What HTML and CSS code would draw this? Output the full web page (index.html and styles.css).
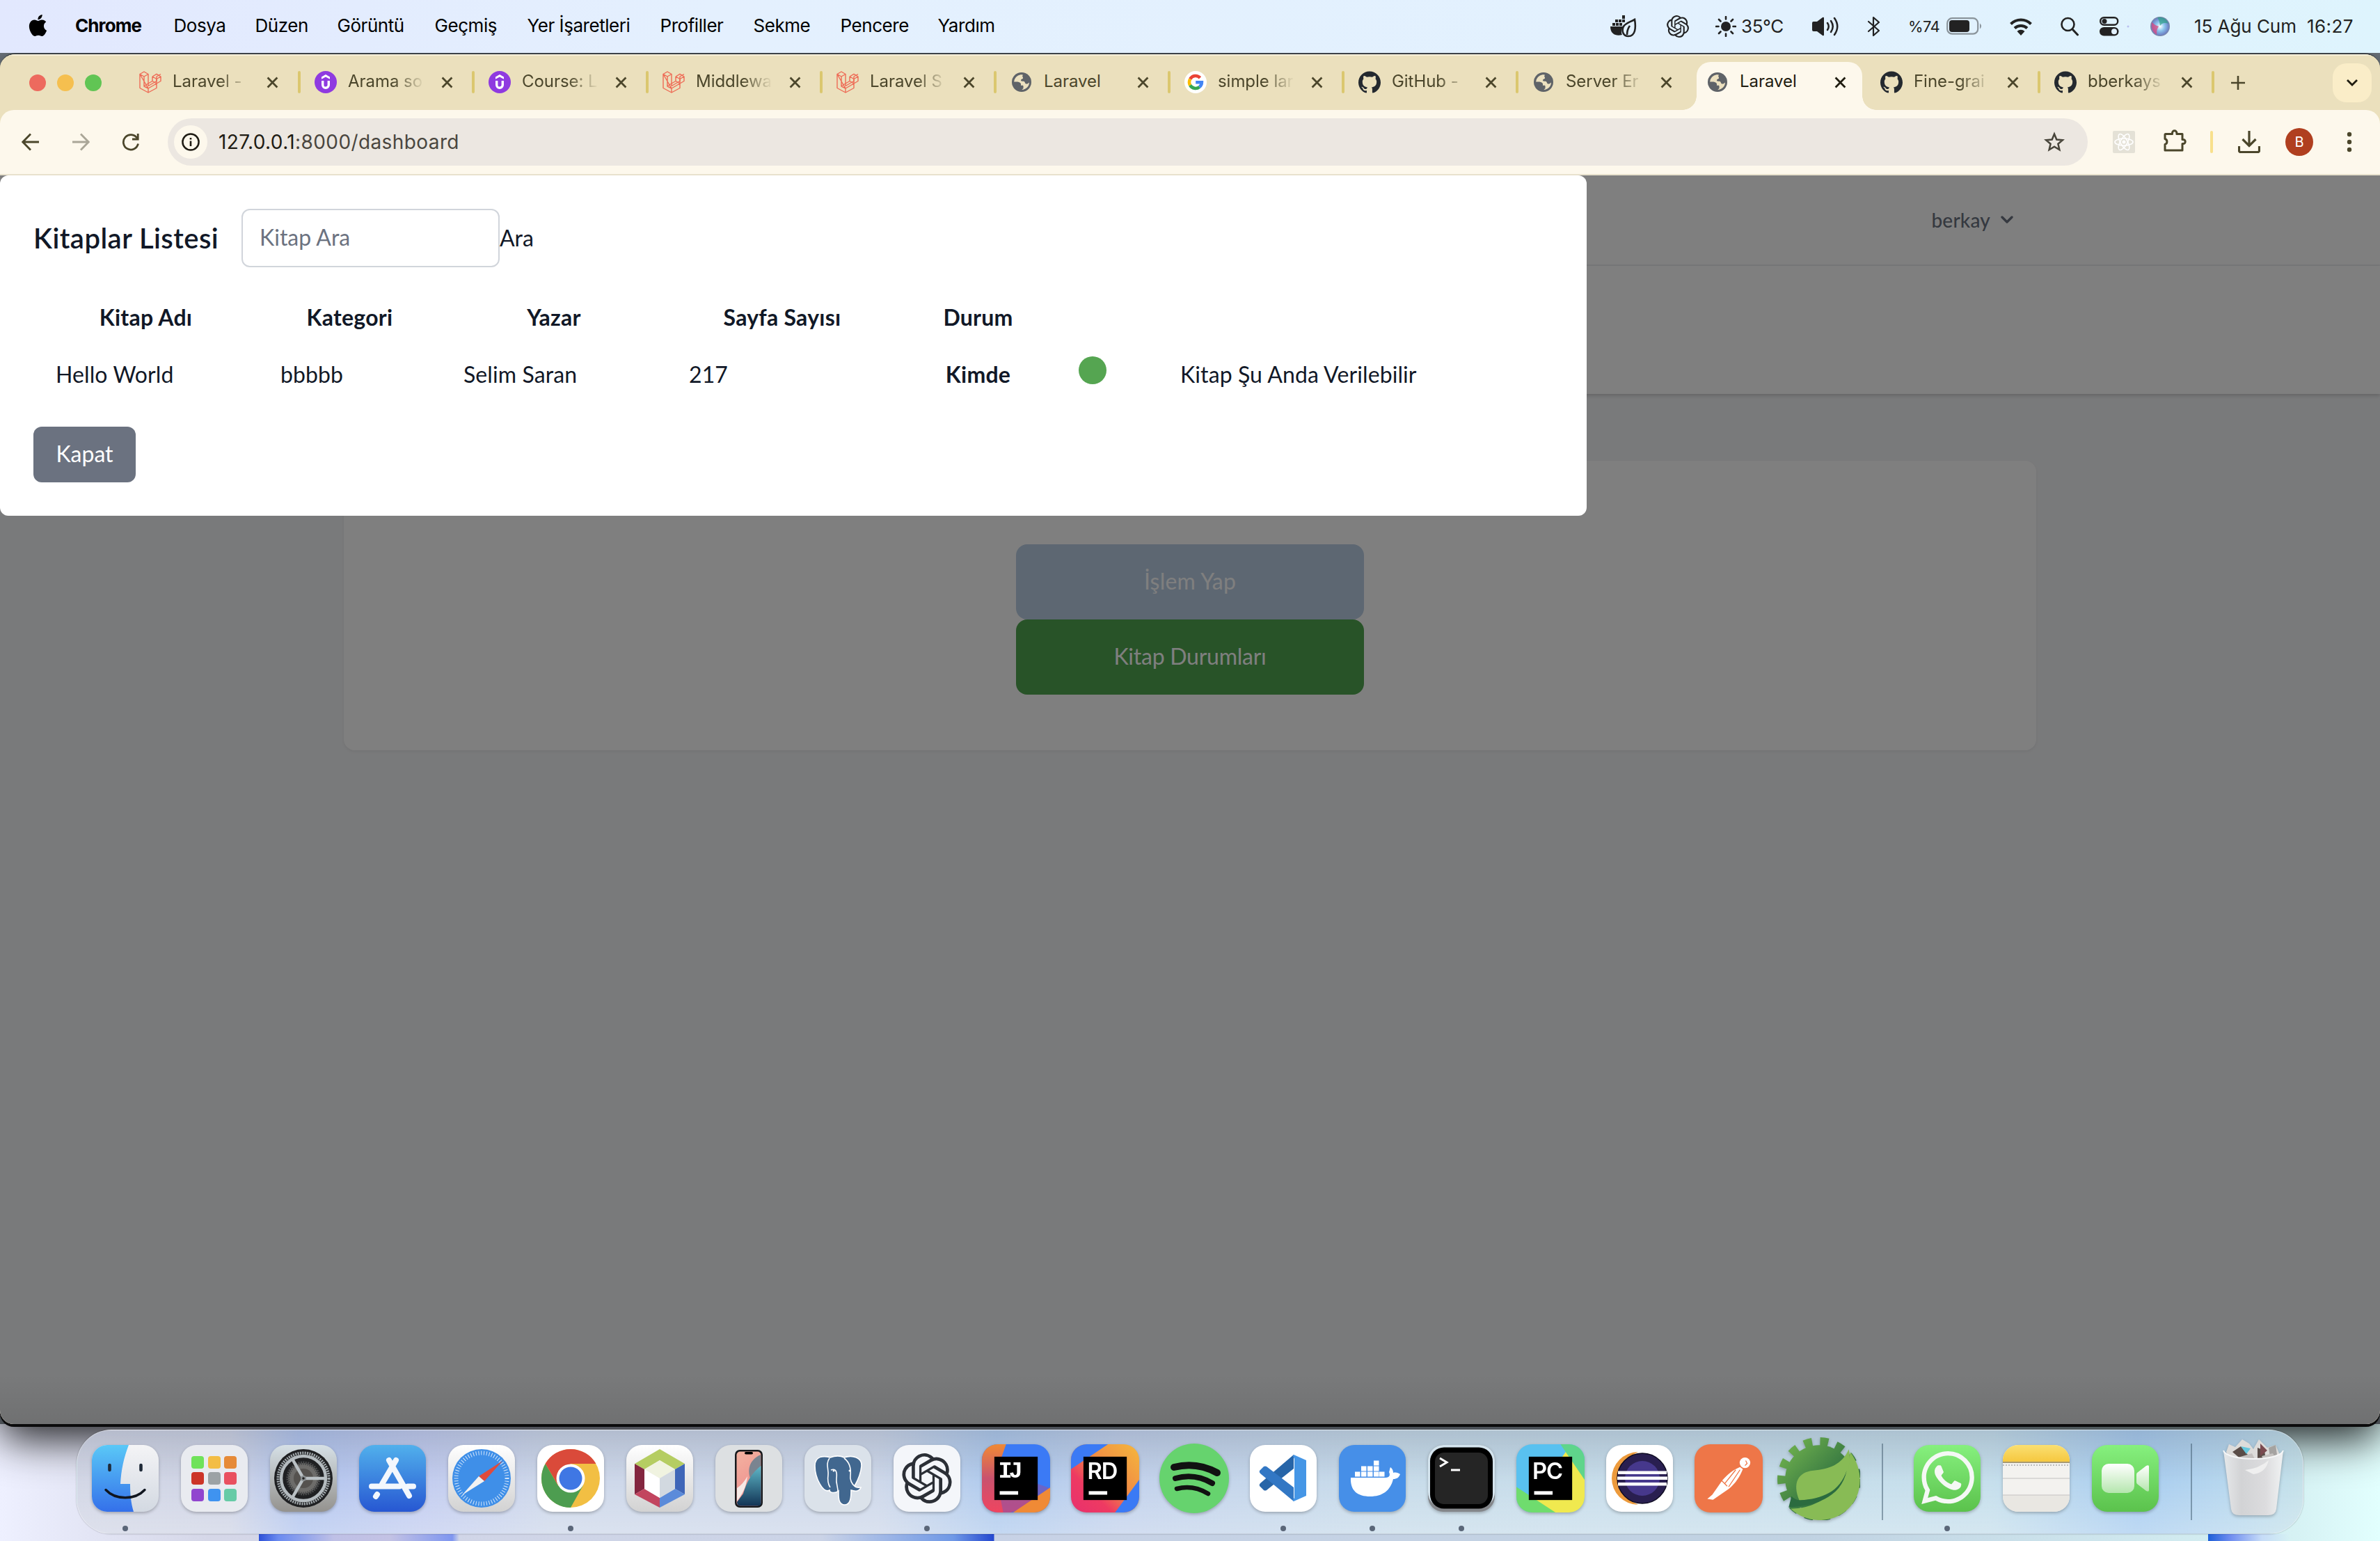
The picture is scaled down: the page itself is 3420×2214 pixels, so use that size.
FILE: index.html
```html
<!DOCTYPE html>
<html lang="tr">
<head>
<meta charset="utf-8">
<title>Laravel</title>
<link rel="stylesheet" href="styles.css">
</head>
<body>
<svg width="0" height="0" class="defs">
  <defs>
    <symbol id="i-laravel" viewBox="0 0 32 32"><g fill="none" stroke="#ee6a55" stroke-width="1.4" stroke-linejoin="round"><path d="M1 4.500 7 1l6 3.500v17L25 14.500V8l6-3.500"/><path d="M1 4.500v20L13 31l12-6.500V18L13 25zM1 4.500 7 8l6-3.500M7 8v14l6 3M13 25v6M7 21.500 19 14.500 25 18M19 8l6-3.700L31 8v6.500L25 18M19 8l6 3.500L31 8M25 11.500V18M19 8v6.500"/></g></symbol>
    <symbol id="i-udemy" viewBox="0 0 32 32"><circle cx="16" cy="16" r="16" fill="#8f3ae0"/><path d="M16 5l6 3.500v3.300L16 8.400l-6 3.400V8.500z" fill="#fff"/><path d="M11.700 14v6a4.300 4.300 0 0 0 8.600 0v-6" fill="none" stroke="#fff" stroke-width="3.400"/></symbol>
    <symbol id="i-globe" viewBox="0 0 28 28"><circle cx="14" cy="14" r="14" fill="#5f6368"/><path d="M12.500 3.200A11 11 0 0 0 3.100 13.500c2.400.2 4.800-.3 7 .6 1.600.8 3 1.200 3 3l-.2 1.700h2.600c1.500 0 1 2.800 1 4.200L14.300 25c6-.2 10.600-4.800 10.700-10.500-1.500 1.400-3 2.400-4.600 2-1.600-.4-1.300-3-2.800-3.600-2-.5-4 .4-4.600-1.400-.4-1.700 2.200-1.700 3-3 .5-1.100-.7-1.800-.8-2.800 0-.8.500-1.300.6-2.200-1.100-.4-2.200-.4-3.300-.3z" fill="#ece1c0"/></symbol>
    <symbol id="i-google" viewBox="0 0 32 32"><circle cx="16" cy="16" r="16" fill="#fff"/><g fill="none" stroke-width="4.600"><path d="M22.500 9.800A9 9 0 0 0 8.200 11.500" stroke="#ea4335"/><path d="M8.200 11.500a9.200 9.200 0 0 0 0 9" stroke="#fbbc05"/><path d="M8.200 20.500A9 9 0 0 0 21.600 23" stroke="#34a853"/><path d="M21.600 23a9 9 0 0 0 3.300-6.800H16.200" stroke="#4285f4"/></g></symbol>
    <symbol id="i-github" viewBox="0 0 24 24"><path fill="#24292f" d="M12 .297c-6.630 0-12 5.373-12 12 0 5.303 3.438 9.800 8.205 11.385.6.113.82-.258.82-.577 0-.285-.01-1.040-.015-2.040-3.338.724-4.042-1.610-4.042-1.610C4.422 18.070 3.633 17.700 3.633 17.700c-1.087-.744.084-.729.084-.729 1.205.084 1.838 1.236 1.838 1.236 1.070 1.835 2.809 1.305 3.495.998.108-.776.417-1.305.76-1.605-2.665-.3-5.466-1.332-5.466-5.930 0-1.310.465-2.380 1.235-3.220-.135-.303-.54-1.523.105-3.176 0 0 1.005-.322 3.300 1.230.96-.267 1.980-.399 3-.405 1.020.006 2.040.138 3 .405 2.280-1.552 3.285-1.230 3.285-1.230.645 1.653.24 2.873.12 3.176.765.84 1.230 1.910 1.230 3.220 0 4.610-2.805 5.625-5.475 5.920.42.36.81 1.096.81 2.220 0 1.606-.015 2.896-.015 3.286 0 .315.21.69.825.57C20.565 22.092 24 17.592 24 12.297c0-6.627-5.373-12-12-12"/></symbol>
    <symbol id="i-close" viewBox="0 0 16 16"><path d="M1.500 1.500l13 13M14.500 1.500l-13 13" stroke="currentColor" stroke-width="2.600"/></symbol>
    <symbol id="i-openai" viewBox="0 0 24 24"><path fill="currentColor" d="M22.2819 9.8211a5.9847 5.9847 0 0 0-.5157-4.9108 6.0462 6.0462 0 0 0-6.5098-2.9A6.0651 6.0651 0 0 0 4.9807 4.1818a5.9847 5.9847 0 0 0-3.9977 2.9 6.0462 6.0462 0 0 0 .7427 7.0966 5.98 5.98 0 0 0 .511 4.9107 6.051 6.051 0 0 0 6.5146 2.9001A5.9847 5.9847 0 0 0 13.2599 24a6.0557 6.0557 0 0 0 5.7718-4.2058 5.9894 5.9894 0 0 0 3.9977-2.9001 6.0557 6.0557 0 0 0-.7475-7.0729zm-9.022 12.6081a4.4755 4.4755 0 0 1-2.8764-1.0408l.1419-.0804 4.7783-2.7582a.7948.7948 0 0 0 .3927-.6813v-6.7369l2.02 1.1686a.071.071 0 0 1 .038.052v5.5826a4.504 4.504 0 0 1-4.4945 4.4944zm-9.6607-4.1254a4.4708 4.4708 0 0 1-.5346-3.0137l.142.0852 4.783 2.7582a.7712.7712 0 0 0 .7806 0l5.8428-3.3685v2.3324a.0804.0804 0 0 1-.0332.0615L9.74 19.9502a4.4992 4.4992 0 0 1-6.1408-1.6464zM2.3408 7.8956a4.485 4.485 0 0 1 2.3655-1.9728V11.6a.7664.7664 0 0 0 .3879.6765l5.8144 3.3543-2.0201 1.1685a.0757.0757 0 0 1-.071 0l-4.8303-2.7865A4.504 4.504 0 0 1 2.3408 7.872zm16.5963 3.8558L13.1038 8.364 15.1192 7.2a.0757.0757 0 0 1 .071 0l4.8303 2.7913a4.4944 4.4944 0 0 1-.6765 8.1042v-5.6772a.79.79 0 0 0-.407-.667zm2.0107-3.0231l-.142-.0852-4.7735-2.7818a.7759.7759 0 0 0-.7854 0L9.409 9.2297V6.8974a.0662.0662 0 0 1 .0284-.0615l4.8303-2.7866a4.4992 4.4992 0 0 1 6.6802 4.66zM8.3065 12.863l-2.02-1.1638a.0804.0804 0 0 1-.038-.0567V6.0742a4.4992 4.4992 0 0 1 7.3757-3.4537l-.142.0805L8.704 5.459a.7948.7948 0 0 0-.3927.6813zm1.0976-2.3654l2.602-1.4998 2.6069 1.4998v2.9994l-2.5974 1.4997-2.6067-1.4997Z"/></symbol>
    <linearGradient id="g-finder" x2="0" y2="1"><stop stop-color="#5ac8f7"/><stop offset="1" stop-color="#3470ea"/></linearGradient>
    <linearGradient id="g-face" x2="0" y2="1"><stop stop-color="#f4f4f6"/><stop offset="1" stop-color="#d3d9e2"/></linearGradient>
    <linearGradient id="g-silver" x2="0" y2="1"><stop stop-color="#d6e0e6"/><stop offset="1" stop-color="#94928e"/></linearGradient>
    <linearGradient id="g-store" x2="0" y2="1"><stop stop-color="#51b0ec"/><stop offset="1" stop-color="#2757d2"/></linearGradient>
    <linearGradient id="g-white" x2="0" y2="1"><stop stop-color="#fff"/><stop offset="1" stop-color="#d2d2d2"/></linearGradient>
    <linearGradient id="g-green" x2="0" y2="1"><stop stop-color="#86f07e"/><stop offset="1" stop-color="#5bc24c"/></linearGradient>
    <linearGradient id="g-ijl" x2="0" y2="1"><stop stop-color="#f08a35"/><stop offset=".5" stop-color="#c9526e"/><stop offset="1" stop-color="#ef4560"/></linearGradient>
    <linearGradient id="g-rd" x1="1" y1="0" x2="0" y2="1"><stop stop-color="#f5b83c"/><stop offset=".45" stop-color="#f08a45"/><stop offset=".7" stop-color="#ee3a62"/><stop offset="1" stop-color="#e8306e"/></linearGradient>
    <linearGradient id="g-phone" x2=".3" y2="1"><stop stop-color="#f3b2a0"/><stop offset="1" stop-color="#ee8d8d"/></linearGradient>
    <linearGradient id="g-sea" x2="0" y2="1"><stop stop-color="#5fb8c8"/><stop offset="1" stop-color="#123455"/></linearGradient>
    <linearGradient id="g-spring" gradientUnits="userSpaceOnUse" x1="20" y1="20" x2="80" y2="80"><stop stop-color="#67a94c"/><stop offset="1" stop-color="#2b6b3f"/></linearGradient>
    <linearGradient id="g-note" x2="0" y2="1"><stop stop-color="#fadf72"/><stop offset="1" stop-color="#f6c83f"/></linearGradient>
    <linearGradient id="g-bin" x2="1" y2="0"><stop stop-color="#e6e8ea"/><stop offset=".3" stop-color="#d2d3d5"/><stop offset=".7" stop-color="#dcdcde"/><stop offset="1" stop-color="#f0f2f3"/></linearGradient>
    <linearGradient id="g-cam" x2="0" y2="1"><stop stop-color="#fff"/><stop offset="1" stop-color="#b5e6ae"/></linearGradient>
    <radialGradient id="g-siri"><stop stop-color="#fff"/><stop offset=".45" stop-color="#8cc4ec"/><stop offset=".85" stop-color="#6f86c8"/><stop offset="1" stop-color="#7a86a4"/></radialGradient>
    <clipPath id="sq"><rect width="96" height="96" rx="22"/></clipPath>
  </defs>
</svg>

<header class="menubar">
  <nav class="menus">
    <svg class="apple" viewBox="0 0 24 24"><path d="M12.152 6.896c-.948 0-2.415-1.078-3.960-1.040-2.040.027-3.910 1.183-4.961 3.014-2.117 3.675-.546 9.103 1.519 12.090 1.013 1.454 2.208 3.090 3.792 3.039 1.520-.065 2.090-.987 3.935-.987 1.831 0 2.350.987 3.960.948 1.637-.026 2.676-1.480 3.676-2.948 1.156-1.688 1.636-3.325 1.662-3.415-.039-.013-3.182-1.221-3.220-4.857-.026-3.040 2.480-4.494 2.597-4.559-1.429-2.090-3.623-2.324-4.390-2.376-2-.156-3.675 1.090-4.610 1.090zM15.530 3.830c.843-1.012 1.400-2.427 1.245-3.830-1.207.052-2.662.805-3.532 1.818-.78.896-1.454 2.338-1.273 3.714 1.338.104 2.715-.688 3.559-1.701"/></svg>
    <b>Chrome</b><span>Dosya</span><span>Düzen</span><span>Görüntü</span><span>Geçmiş</span><span>Yer İşaretleri</span><span>Profiller</span><span>Sekme</span><span>Pencere</span><span>Yardım</span>
  </nav>
  <div class="status">
    <svg width="38" height="32" viewBox="0 0 38 32"><path d="M0 16h19c-3 4-4 8-2 12-8 2-17 0-17-12zM3 11h4v4H3zM8 11h4v4H8zM13 11h4v4h-4zM7 6h4v4H7zM12 6h4v4h-4zM17 6h4v4h-4zM17 0h4v5h-4z" fill="#222"/><path d="M35 6c2 12 1 24-9 24-8 0-10-8-7-14 3-5 9-6 16-10zM24 28c0-5 1-9 4-13" fill="none" stroke="#222" stroke-width="2.600"/></svg>
    <svg width="32" height="32" class="ink"><use href="#i-openai"/></svg>
    <div class="pair"><svg width="30" height="30" viewBox="0 0 30 30"><circle cx="15" cy="15" r="7" fill="#222"/><path d="M15 1v3.500M15 25.500V29M1 15h3.500M25.500 15H29M5 5l2.500 2.500M22.500 22.500 25 25M5 25l2.500-2.500M22.500 7.500 25 5" stroke="#222" stroke-width="2.600" stroke-linecap="round"/></svg><span class="temp">35°C</span></div>
    <svg width="40" height="28" viewBox="0 0 40 28"><path d="M0 9q0-2 2-2h5l8-6q2-1 2 1v24q0 2-2 1l-8-6H2q-2 0-2-2z" fill="#222"/><path d="M22 9q3.500 5 0 10M27 6q5.500 8 0 16M32 2q8.500 12 0 24" fill="none" stroke="#222" stroke-width="2.500" stroke-linecap="round"/></svg>
    <svg width="20" height="30" viewBox="0 0 20 30"><path d="M2 8l15 13-8 7V2l8 7L2 22" fill="none" stroke="#222" stroke-width="2.200" stroke-linejoin="round" stroke-linecap="round"/></svg>
    <div class="pair"><span class="pct">%74</span><svg width="52" height="26" viewBox="0 0 52 26"><rect x="1.200" y="1.200" width="44" height="22.500" rx="7" fill="none" stroke="#8a949b" stroke-width="2.200"/><rect x="4" y="4" width="29" height="17" rx="4" fill="#222"/><path d="M48 8.500q4 4 0 8z" fill="#8a949b"/></svg></div>
    <svg width="34" height="26" viewBox="0 0 34 26"><path d="M2.500 9.500a20.500 20.500 0 0 1 29 0M8 15.500a13 13 0 0 1 18 0" fill="none" stroke="#222" stroke-width="4"/><path d="M11.500 20a8 8 0 0 1 11 0L17 26z" fill="#222"/></svg>
    <svg width="26" height="28" viewBox="0 0 26 28"><circle cx="10.500" cy="11" r="9" fill="none" stroke="#222" stroke-width="2.600"/><path d="M17 18l7.500 8" stroke="#222" stroke-width="3" stroke-linecap="round"/></svg>
    <svg width="46" height="28" viewBox="0 0 46 28"><rect x="1.200" y="1.200" width="25" height="10.500" rx="5.200" fill="none" stroke="#222" stroke-width="2.400"/><circle cx="7" cy="6.500" r="3.500" fill="#222"/><rect y="15" width="27.500" height="12.500" rx="6.200" fill="#222"/><circle cx="21" cy="21.200" r="4" fill="#e2f1fe"/><circle cx="41" cy="14" r="1.500" fill="#b9bff0"/></svg>
    <svg width="28" height="28" viewBox="0 0 28 28"><circle cx="14" cy="14" r="14" fill="url(#g-siri)"/><path d="M2 8Q0 20 9 26q0-9 3-12Q6 12 2 8z" fill="#d8467f" opacity=".75"/><path d="M10 1q12-2 16 9-8-3-12 3-1-8-4-12z" fill="#2f9f86" opacity=".7"/></svg>
    <span class="date">15 Ağu Cum</span><span class="clock">16:27</span>
  </div>
</header>

<main class="window">
  <div class="tabstrip">
    <div class="lights"><i class="red"></i><i class="yellow"></i><i class="green"></i></div>
    <div class="tab first"><svg class="fav"><use href="#i-laravel"/></svg><span class="tt">Laravel -</span><svg class="x"><use href="#i-close"/></svg></div>
    <div class="tab"><svg class="fav"><use href="#i-udemy"/></svg><span class="tt">Arama so</span><svg class="x"><use href="#i-close"/></svg></div>
    <div class="tab"><svg class="fav"><use href="#i-udemy"/></svg><span class="tt">Course: L</span><svg class="x"><use href="#i-close"/></svg></div>
    <div class="tab"><svg class="fav"><use href="#i-laravel"/></svg><span class="tt">Middlewa</span><svg class="x"><use href="#i-close"/></svg></div>
    <div class="tab"><svg class="fav"><use href="#i-laravel"/></svg><span class="tt">Laravel S</span><svg class="x"><use href="#i-close"/></svg></div>
    <div class="tab"><svg class="fav small"><use href="#i-globe"/></svg><span class="tt full">Laravel</span><svg class="x"><use href="#i-close"/></svg></div>
    <div class="tab"><svg class="fav"><use href="#i-google"/></svg><span class="tt">simple lar</span><svg class="x"><use href="#i-close"/></svg></div>
    <div class="tab"><svg class="fav"><use href="#i-github"/></svg><span class="tt">GitHub -</span><svg class="x"><use href="#i-close"/></svg></div>
    <div class="tab nosep"><svg class="fav small"><use href="#i-globe"/></svg><span class="tt">Server Er</span><svg class="x"><use href="#i-close"/></svg></div>
    <div class="tab active"><svg class="fav small"><use href="#i-globe"/></svg><span class="tt full">Laravel</span><svg class="x"><use href="#i-close"/></svg></div>
    <div class="tab"><svg class="fav"><use href="#i-github"/></svg><span class="tt">Fine-grai</span><svg class="x"><use href="#i-close"/></svg></div>
    <div class="tab"><svg class="fav"><use href="#i-github"/></svg><span class="tt">bberkays</span><svg class="x"><use href="#i-close"/></svg></div>
    <svg class="plus" viewBox="0 0 20 20"><path d="M10 0v20M0 10h20" stroke="#4b462b" stroke-width="2.600"/></svg>
    <div class="chev"><svg width="16" height="10" viewBox="0 0 16 10"><path d="M1 1l7 7 7-7" fill="none" stroke="#1f1c10" stroke-width="2.800"/></svg></div>
  </div>

  <div class="toolbar">
    <svg class="nav back" viewBox="0 0 26 26"><path d="M25 13H2M13 1.500 1.800 13 13 24.500" fill="none" stroke="#4b462b" stroke-width="2.800"/></svg>
    <svg class="nav" viewBox="0 0 26 26"><path d="M1 13h23M13 1.500 24.200 13 13 24.500" fill="none" stroke="#aaa697" stroke-width="2.800"/></svg>
    <svg class="nav" viewBox="0 0 26 26"><path d="M23.500 15.500A10.700 10.700 0 1 1 22 7.500" fill="none" stroke="#4b462b" stroke-width="2.800"/><path d="M24.600 1v9.500H15V7.600h6.800V1z" fill="#4b462b"/></svg>
    <div class="omnibox">
      <div class="info"><svg width="26" height="26" viewBox="0 0 26 26"><circle cx="13" cy="13" r="11.600" fill="none" stroke="#1f1c14" stroke-width="2.500"/><path d="M13 11.500v7.500M13 7v2.600" stroke="#1f1c14" stroke-width="2.600"/></svg></div>
      <span class="url"><b>127.0.0.1</b>:8000/dashboard</span>
      <svg class="star" viewBox="0 0 30 30"><path d="M15 3.500l3.300 8 8.600.7-6.500 5.600 2 8.400L15 21.700l-7.400 4.500 2-8.400-6.500-5.600 8.600-.7z" fill="none" stroke="#47443a" stroke-width="2.500"/></svg>
    </div>
    <svg class="react" viewBox="0 0 32 32"><rect width="32" height="32" rx="2" fill="#e4e1d6"/><g fill="none" stroke="#fff" stroke-width="1.600"><ellipse cx="16" cy="16" rx="13" ry="5"/><ellipse cx="16" cy="16" rx="13" ry="5" transform="rotate(60 16 16)"/><ellipse cx="16" cy="16" rx="13" ry="5" transform="rotate(120 16 16)"/></g><circle cx="16" cy="16" r="2.500" fill="#fff"/></svg>
    <svg class="puzzle" viewBox="0 0 34 34"><path d="M4 7.500h9.500V6a3.200 3.200 0 0 1 6.400 0v1.500H28v8h1.200a3 3 0 0 1 0 6H28V31H3v-8.500a4.200 4.200 0 0 0 0-8V8.500q0-1 1-1z" fill="none" stroke="#4b462b" stroke-width="3" stroke-linejoin="round"/></svg>
    <i class="tsep"></i>
    <svg class="dl" viewBox="0 0 32 32"><path d="M16 0v21M6.500 12l9.500 9.500L25.500 12M1.500 22v6.500q0 2 2 2h25q2 0 2-2V22" fill="none" stroke="#4b462b" stroke-width="3.200"/></svg>
    <span class="avatar">B</span>
    <svg class="dots" viewBox="0 0 8 30"><circle cx="4" cy="4" r="3.200"/><circle cx="4" cy="15" r="3.200"/><circle cx="4" cy="26" r="3.200"/></svg>
  </div>

  <div class="page">
    <div class="appnav"><span>berkay</span><svg width="18" height="12" viewBox="0 0 18 12"><path d="M2 2l7 7 7-7" fill="none" stroke="#6b7280" stroke-width="3.400" stroke-linecap="round" stroke-linejoin="round"/></svg></div>
    <div class="apphead"></div>
    <section class="card">
      <button class="act blue">İşlem Yap</button>
      <button class="act green">Kitap Durumları</button>
    </section>
    <div class="overlay">
      <div class="modal">
        <div class="mhead"><h2>Kitaplar Listesi</h2><div class="field">Kitap Ara</div><span class="ara">Ara</span></div>
        <table class="books">
          <colgroup><col class="c1"><col class="c2"><col class="c3"><col class="c4"><col class="c5"><col class="c6"><col class="c7"></colgroup>
          <tr><th>Kitap Adı</th><th>Kategori</th><th>Yazar</th><th>Sayfa Sayısı</th><th>Durum</th><td></td><td></td></tr>
          <tr><td>Hello World</td><td>bbbbb</td><td>Selim Saran</td><td>217</td><th>Kimde</th><td><i class="ok"></i></td><td>Kitap Şu Anda Verilebilir</td></tr>
        </table>
        <button class="kapat">Kapat</button>
      </div>
    </div>
  </div>
</main>

<footer class="desk">
  <div class="dock">
    <div class="app run"><svg class="ic" viewBox="0 0 96 96"><g clip-path="url(#sq)"><rect width="96" height="96" fill="url(#g-face)"/><path d="M0 0h53C46 18 42 36 41 56h14c0 14 1 27 5 40H0z" fill="url(#g-finder)"/></g><path d="M25.500 29v7M70.500 29v7" stroke="#1f2a38" stroke-width="4.600" stroke-linecap="round"/><path d="M20 64.500c14 15 42 15 56 0" fill="none" stroke="#10151f" stroke-width="3.400" stroke-linecap="round"/></svg></div>
    <div class="app"><svg class="ic" viewBox="0 0 96 96"><rect width="96" height="96" rx="22" fill="#e9ebf0"/><g><rect x="15" y="16" width="18" height="18" rx="4" fill="#6fe25a"/><rect x="39" y="16" width="18" height="18" rx="4" fill="#f3bd45"/><rect x="62" y="16" width="18" height="18" rx="4" fill="#e68a38"/><rect x="15" y="39" width="18" height="18" rx="4" fill="#cc3428"/><rect x="39" y="39" width="18" height="18" rx="4" fill="#9ca2a5"/><rect x="62" y="39" width="18" height="18" rx="4" fill="#e9505f"/><rect x="15" y="63" width="18" height="18" rx="4" fill="#9145cf"/><rect x="39" y="63" width="18" height="18" rx="4" fill="#3f93f0"/><rect x="62" y="63" width="18" height="18" rx="4" fill="#66cba6"/></g></svg></div>
    <div class="app"><svg class="ic" viewBox="0 0 96 96"><rect width="96" height="96" rx="22" fill="url(#g-silver)"/><circle cx="48" cy="48" r="42" fill="#1f2022"/><circle cx="48" cy="48" r="36.500" fill="none" stroke="#a3aaae" stroke-width="4" stroke-dasharray="2 1.400"/><circle cx="48" cy="48" r="32" fill="none" stroke="#b4bbbf" stroke-width="4.500"/><circle cx="48" cy="48" r="22" fill="#6d6c6a" stroke="#4a4b4c" stroke-width="5" stroke-dasharray="2 1.300"/><circle cx="48" cy="48" r="14" fill="#55524f"/><path d="M48 48h32M48 48 32.500 21M48 48 32.500 75" stroke="#b9c0c4" stroke-width="4.500"/><circle cx="48" cy="48" r="4" fill="#8a8f92"/><circle cx="48" cy="48" r="1.800" fill="#222"/></svg></div>
    <div class="app"><svg class="ic" viewBox="0 0 96 96"><rect width="96" height="96" rx="22" fill="url(#g-store)"/><g stroke="#f3f7fd" stroke-width="8" stroke-linecap="round"><path d="M53 22 33 56M43 22l29 51M18 59.500h40M70 59.500h8M26 71l-2 3"/></g></svg></div>
    <div class="app"><svg class="ic" viewBox="0 0 96 96"><rect width="96" height="96" rx="22" fill="url(#g-white)"/><circle cx="48" cy="48" r="42" fill="#3f8fe8"/><circle cx="48" cy="48" r="36.500" fill="none" stroke="#d5e6fa" stroke-width="6" stroke-dasharray="1 2.800"/><path d="M78 23 52 52l-8-7z" fill="#e04a3c"/><path d="M20 72 44 45l8 7z" fill="#f2f2f2"/></svg></div>
    <div class="app run"><svg class="ic" viewBox="0 0 96 96"><rect width="96" height="96" rx="22" fill="#fff"/><circle cx="48" cy="48" r="42" fill="#f2bf43"/><path d="M11.600 27A42 42 0 0 1 84.400 27H48L30 58z" fill="#da4a3a"/><path d="M11.600 27A42 42 0 0 0 48 90L66 58 30 58.500z" fill="#4d9d50"/><circle cx="48" cy="48" r="20.500" fill="#fff"/><circle cx="48" cy="48" r="16.500" fill="#3f77e4"/></svg></div>
    <div class="app"><svg class="ic" viewBox="0 0 96 96"><rect width="96" height="96" rx="22" fill="url(#g-white)"/><path d="M48 6 84 27 70 35 48 22 26 35 12 27z" fill="#b5cd62"/><path d="M12 27l14 8v28l-14 8z" fill="#83263f"/><path d="M84 27l-14 8v28l14 8z" fill="#3f66b8"/><path d="M12 71l14-8 22 13v14z" fill="#c2455f"/><path d="M84 71l-14-8-22 13v14z" fill="#5b8bda"/><path d="M48 22l22 13-22 13-22-13z" fill="#f0f3e0"/><path d="M26 35l22 13v28L26 63z" fill="#fff"/><path d="M70 35 48 48v28l22-13z" fill="#d2d9e0"/></svg></div>
    <div class="app"><svg class="ic" viewBox="0 0 96 96"><rect width="96" height="96" rx="22" fill="#dde0e2"/><rect x="28" y="7" width="40" height="83" rx="7" fill="#16191c"/><rect x="30.500" y="9.500" width="35" height="78" rx="5" fill="url(#g-phone)"/><path d="M65 14C48 22 46 36 50 48l15-8z" fill="#7a8490"/><path d="M65.500 30C48 44 44 58 40 70l-9 12q0 5 5 5.500h25q5 0 4.500-5z" fill="url(#g-sea)"/><path d="M46 45c-2 18-8 26-15 36V62q9-6 15-17z" fill="#f6eae6"/><rect x="42" y="10" width="12" height="3.600" rx="1.800" fill="#000"/></svg></div>
    <div class="app"><svg class="ic" viewBox="0 0 96 96"><rect width="96" height="96" rx="22" fill="#dbe2ea"/><path d="M15 30c0-14 12-15 22-12 8-3 14-3 20 0 12-4 26 0 25 12-1 12-6 22-10 29 2 3 7 2 9 2-2 6-8 6-14 4 0 8 0 21-9 21-10 0-9-12-9-20-5 4-13 3-13-1-9 5-21-17-21-35z" fill="#41678f" stroke="#fff" stroke-width="1.600"/><path d="M36 19c-6 8-1 16-2 24-1 7-1 12 3 18M57 19c8 6 10 16 9 25-1 6 2 12 6 15M38 36c8-3 9 4 8 12-1 7 2 11 2 19" fill="none" stroke="#fff" stroke-width="1.600"/><circle cx="42" cy="37" r="1.500" fill="#fff"/><circle cx="65" cy="37" r="1.500" fill="#fff"/></svg></div>
    <div class="app run"><svg class="ic gpt" viewBox="0 0 96 96"><rect width="96" height="96" rx="22" fill="#f4f6fa"/><use href="#i-openai" x="12" y="12" width="72" height="72"/></svg></div>
    <div class="app"><svg class="ic big" viewBox="0 0 96 96"><g clip-path="url(#sq)"><rect width="96" height="96" fill="#3b7af5"/><path d="M0 0h34L20 40l60 42-40 14H0z" fill="url(#g-ijl)"/><path d="M18 34 96 62 60 96H30z" fill="#8c55a8" opacity=".6"/><path d="M96 61 44 96h52z" fill="#f08a35"/></g><rect x="17.500" y="17.500" width="61" height="61"/><path d="M25 66h26v5H25z" fill="#fff"/><text x="23" y="47" class="jb mono">IJ</text></svg></div>
    <div class="app"><svg class="ic big" viewBox="0 0 96 96"><g clip-path="url(#sq)"><rect width="96" height="96" fill="url(#g-rd)"/><path d="M0 0h52L0 35z" fill="#3b7af5"/><path d="M96 50 62 96h34z" fill="#3b7af5"/></g><rect x="17.500" y="17.500" width="61" height="61"/><path d="M25 66h26v5H25z" fill="#fff"/><text x="23" y="49" class="jb">RD</text></svg></div>
    <div class="app"><svg class="ic spot" viewBox="0 0 100 100"><circle cx="50" cy="50" r="50" fill="#66d36e"/><g fill="none" stroke="#111" stroke-linecap="round"><path d="M21 34c20-5 42-3 62 8" stroke-width="10"/><path d="M23 50c18-5 36-3 53 7" stroke-width="8"/><path d="M25 65c15-4 30-2 45 7" stroke-width="6.500"/></g></svg></div>
    <div class="app run"><svg class="ic" viewBox="0 0 96 96"><rect width="96" height="96" rx="22" fill="#fff"/><path d="M63 14v20L24 65q-2 1-4 0l-6-6q-1-2 1-4z" fill="#2765a8"/><path d="M63 81V61L24 31q-2-1-4 0l-6 6q-1 2 1 4z" fill="#3277c4"/><path d="M63 14l18 8v51l-18 8q-1 0-1-2l2-3V20l-2-4z" fill="#4596e6"/></svg></div>
    <div class="app run"><svg class="ic" viewBox="0 0 96 96"><rect width="96" height="96" rx="22" fill="#468fe8"/><path d="M17 47h50c6 0 7-4 5-8 1-3 1-5 2-7 3 2 4 5 4 8 4-1 7 0 10 2-2 5-5 7-10 7-4 17-16 25-33 25-18 0-29-8-28-27zM23 38.500h7.500v7H23zM32 38.500h7.500v7H32zM41 38.500h7.500v7H41zM50 38.500h7.500v7H50zM58 38.500h7.500v7H58zM32 30.500h7.500v7H32zM41 30.500h7.500v7H41zM50 30.500h7.500v7H50zM50 22.500h7.500v7H50z" fill="#fff"/></svg></div>
    <div class="app run"><svg class="ic" viewBox="0 0 96 96"><rect width="96" height="96" rx="22" fill="#84868a"/><rect y="0" width="96" height="90" rx="22" fill="#d4e4ee"/><rect x="3" y="3.500" width="90" height="88" rx="20" fill="#000"/><rect x="10" y="11" width="76" height="74" rx="13" fill="#252525"/><path d="M17 19l10 6-10 6M33 36h13" fill="none" stroke="#fff" stroke-width="3"/></svg></div>
    <div class="app"><svg class="ic big" viewBox="0 0 96 96"><g clip-path="url(#sq)"><rect width="96" height="96" fill="#59c1f0"/><path d="M70 10 96 48v48H40L20 80z" fill="#f0e94f"/><path d="M62 0l34 50V0z" fill="#5fd58b"/><path d="M0 60 55 96H0z" fill="#6fdc6e"/></g><rect x="17.500" y="17.500" width="61" height="61"/><path d="M25 66h26v5H25z" fill="#fff"/><text x="22.500" y="49" class="jb">PC</text></svg></div>
    <div class="app"><svg class="ic" viewBox="0 0 96 96"><rect width="96" height="96" rx="22" fill="#fff"/><path d="M46 10a38 38 0 0 0 0 76 42 42 0 0 1 0-76z" fill="#ec9a3c"/><circle cx="52" cy="48" r="36" fill="#291f50" stroke="#0d0a20" stroke-width="1.500"/><circle cx="52" cy="48" r="25" fill="#46388c"/><path d="M17 37.500h70v4.500H17zM16 45.500h72V50H16zM17 54h70v4.500H17z" fill="#fff"/></svg></div>
    <div class="app"><svg class="ic big" viewBox="0 0 96 96"><rect width="96" height="96" rx="22" fill="#ee7648"/><circle cx="71" cy="26" r="7.500" fill="#fff"/><path d="M64 32l4 3c-4 10-10 20-20 28L26 78l-8-1 7-6 14-20c8-9 15-15 25-19z" fill="#fff"/><path d="M58 36 42 56M64 36 48 60M38 51l8 8M72 23l2 4-3 3" stroke="#ee7648" stroke-width="1.300" fill="none"/></svg></div>
    <div class="app"><svg class="ic spring" viewBox="0 0 118 118"><circle cx="60" cy="60" r="53" fill="none" stroke="url(#g-spring)" stroke-width="12" stroke-dasharray="11.500 11.300"/><circle cx="60" cy="60" r="48" fill="url(#g-spring)"/><path d="M104 22c20 26 18 62-5 82s-58 18-79-2C56 102 96 80 104 22z" fill="#88bb55"/><path d="M32 90C22 66 30 50 52 48c22-2 40-8 50-30 6 34-12 72-70 72z" fill="#88bb55"/><path d="M17 100c34-2 74-12 82-52-10 30-34 40-66 42-6-1-10-3-12-6z" fill="#2b6b3f"/></svg></div>
    <div class="split"><i></i></div>
    <div class="app run"><svg class="ic" viewBox="0 0 96 96"><rect width="96" height="96" rx="22" fill="url(#g-green)"/><svg x="11" y="9" width="76" height="76" viewBox="0 0 24 24"><path fill="#f5f8f5" d="M17.472 14.382c-.297-.149-1.758-.867-2.030-.967-.273-.099-.471-.148-.67.15-.197.297-.767.966-.94 1.164-.173.199-.347.223-.644.075-.297-.15-1.255-.463-2.390-1.475-.883-.788-1.480-1.761-1.653-2.059-.173-.297-.018-.458.13-.606.134-.133.298-.347.446-.52.149-.174.198-.298.298-.497.099-.198.05-.371-.025-.52-.075-.149-.669-1.612-.916-2.207-.242-.579-.487-.5-.669-.51-.173-.008-.371-.01-.57-.01-.198 0-.52.074-.792.372-.272.297-1.040 1.016-1.040 2.479 0 1.462 1.065 2.875 1.213 3.074.149.198 2.096 3.200 5.077 4.487.709.306 1.262.489 1.694.625.712.227 1.360.195 1.871.118.571-.085 1.758-.719 2.006-1.413.248-.694.248-1.289.173-1.414-.074-.124-.272-.198-.57-.347m-5.421 7.403h-.004a9.870 9.870 0 01-5.031-1.378l-.361-.214-3.741.982.998-3.648-.235-.374a9.860 9.860 0 01-1.510-5.260c.001-5.450 4.436-9.884 9.888-9.884 2.640 0 5.122 1.030 6.988 2.898a9.825 9.825 0 012.893 6.994c-.003 5.450-4.437 9.884-9.885 9.884m8.413-18.297A11.815 11.815 0 0012.050 0C5.495 0 .16 5.335.157 11.892c0 2.096.547 4.142 1.588 5.945L.057 24l6.305-1.654a11.882 11.882 0 005.683 1.448h.005c6.554 0 11.890-5.335 11.893-11.893a11.821 11.821 0 00-3.480-8.413Z"/></svg></svg></div>
    <div class="app"><svg class="ic" viewBox="0 0 96 96"><g clip-path="url(#sq)"><rect width="96" height="96" fill="#f3f2ef"/><rect y="72" width="96" height="24" fill="#e9e7e2"/><rect width="96" height="24" fill="url(#g-note)"/><path d="M0 25h96" stroke="#a79a72" stroke-width="2"/><path d="M0 29h96" stroke="#bbb" stroke-width="2" stroke-dasharray="2 2"/><path d="M0 48h96M0 72h96" stroke="#d2d1cf" stroke-width="1.500"/></g></svg></div>
    <div class="app"><svg class="ic" viewBox="0 0 96 96"><rect width="96" height="96" rx="22" fill="url(#g-green)"/><rect x="14" y="27" width="47" height="42" rx="10" fill="url(#g-cam)"/><path d="M64 43q0-2 1-3l13-10q4-2 4 1v34q0 3-4 1L65 56q-1-1-1-3z" fill="url(#g-cam)"/></svg></div>
    <div class="split end"><i></i></div>
    <div class="app bin"><svg class="ic trash" viewBox="0 0 88 112"><path d="M5 20 9 9l9 4L28 2l10 6 6 8 8-14 12 12 12-4 6 14-4 16H14z" fill="#dddcda"/><path d="M14 20l12-8 10 12-8 8zM50 14l10 4 2 14-12-2z" fill="#5a4d48"/><path d="M26 12l14 3-6 8z" fill="#67c7dc"/><path d="M54 8l10 10-10 8z" fill="#7a4a50"/><path d="M66 14l10-4 2 14-10 4z" fill="#a5a3a1"/><path d="M22 28l20-6 4 8-18 4zM56 26l16-4 4 8-16 4z" fill="#c4c1bf"/><path d="M1 18C6 34 82 34 87 18L77 102q-1 9-12 9H24q-11 0-12-9z" fill="url(#g-bin)"/><path d="M1 18C6 34 82 34 87 18" fill="none" stroke="#f6f7f8" stroke-width="2"/><path d="M32 46q20-2 34-14-4 18-22 20z" fill="#efefef"/></svg></div>
  </div>
</footer>
</body>
</html>
```
FILE: styles.css
```css
* { box-sizing: border-box; }
html, body { margin: 0; }
body {
  width: 3420px;
  height: 2214px;
  overflow: hidden;
  display: flex;
  flex-direction: column;
  font-family: Inter, "Liberation Sans", sans-serif;
  color: #000;
  background: #707880;
}
.defs { position: absolute; }
svg { display: block; flex: none; }
button { border: 0; margin: 0; padding: 0; font: inherit; }

/* menu bar */
.menubar {
  height: 76px;
  flex: none;
  position: relative;
  z-index: 3;
  display: flex;
  justify-content: space-between;
  background: linear-gradient(90deg, #e2e8fe 0%, #e4f0fe 30%, #e2f1fe 75%, #def4fd 100%);
  font-size: 26px;
  line-height: 74px;
  white-space: nowrap;
}
.menus {
  display: grid;
  grid-template-columns: 84px 140px 117px 118px 140px 133px 191px 134px 125px 140px 120px;
  padding-left: 24px;
  letter-spacing: -0.45px;
}
.menus span { padding-left: 1.5px; }
.menus b { font-weight: 700; letter-spacing: -0.9px; }
.apple { width: 31px; height: 31px; margin: 21px 0 0 15px; }
.status {
  display: grid;
  grid-template-columns: 81px 70px 139px 79px 59px 145px 74px 56px 73px 63px 162px 105px;
  align-items: center;
  color: #222;
  height: 76px;
}
.ink { color: #222; }
.pair { display: flex; align-items: center; line-height: 74px; }
.temp { margin-left: 7px; letter-spacing: -0.4px; }
.pct { font-size: 22px; width: 55px; letter-spacing: -0.6px; }
.date { letter-spacing: -0.05px; }
.clock { letter-spacing: 0.4px; }

/* browser window */
.window {
  height: 1970px;
  flex: none;
  border-top: 2px solid #3c4248;
  border-radius: 22px 22px 20px 20px;
  background: #ebe0bd;
  overflow: hidden;
  z-index: 1;
  box-shadow: 0 4px 0 #0b0b0c, 0 22px 60px rgba(0, 0, 0, .85);
  position: relative;
}
.tabstrip {
  height: 80px;
  display: flex;
  align-items: center;
  background: #ebe0bd;
  border-top: 2px solid #f6efd9;
  color: #4b462b;
}
.lights { display: flex; gap: 16px; width: 180px; padding-left: 42px; }
.lights i { width: 24px; height: 24px; border-radius: 50%; }
.red { background: #ed6a5e; }
.yellow { background: #f5bf4f; }
.green { background: #61c554; }
.tab {
  width: 250px;
  height: 78px;
  flex: none;
  display: flex;
  align-items: center;
  padding: 0 0 2px 20px;
  position: relative;
}
.tab.first { width: 252px; }
.tab.first .x { margin-right: 1px; }
.tab::after {
  content: "";
  width: 4px;
  height: 32px;
  border-radius: 2px;
  background: #dbc76f;
  margin-left: 27px;
}
.tab.nosep::after { display: none; }
.fav { width: 32px; height: 32px; }
.fav.small { width: 28px; height: 28px; margin: 0 2px; }
.tt {
  width: 112px;
  margin: -2px 24px 0 16px;
  white-space: nowrap;
  font-size: 24px;
  line-height: 36px;
  letter-spacing: -0.05px;
  -webkit-mask-image: linear-gradient(90deg, #000 60%, transparent 100%);
  mask-image: linear-gradient(90deg, #000 60%, transparent 100%);
}
.tt.full { -webkit-mask-image: none; mask-image: none; }
.x { width: 17px; height: 17px; }
.active { color: #1f1c10; z-index: 0; }
.active::before {
  content: "";
  position: absolute;
  z-index: -1;
  left: 6px;
  top: 9px;
  width: 238px;
  height: 69px;
  border-radius: 20px 20px 0 0;
  background: #fdf8ec;
}
.tab.active::after {
  position: absolute;
  z-index: -1;
  left: -14px;
  bottom: 0;
  width: 278px;
  height: 20px;
  margin: 0;
  border-radius: 0;
  background:
    radial-gradient(circle at 0 0, transparent 19.5px, #fdf8ec 20px) left / 20px 20px no-repeat,
    radial-gradient(circle at 100% 0, transparent 19.5px, #fdf8ec 20px) right / 20px 20px no-repeat;
}
.plus { width: 20px; height: 20px; margin-left: 24px; }
.chev {
  width: 56px;
  height: 56px;
  margin: 0 12px 0 auto;
  border-radius: 20px;
  background: #faedc8;
  display: grid;
  place-items: center;
}
.toolbar {
  height: 94px;
  display: flex;
  align-items: center;
  padding-left: 31px;
  background: #fdf8ec;
  border-bottom: 2px solid #e8e1cd;
  border-radius: 20px 20px 0 0;
}
.nav { width: 26px; height: 26px; margin-right: 46px; }
.omnibox {
  width: 2759px;
  height: 68px;
  margin-left: -6px;
  border-radius: 34px;
  background: #ece7e1;
  display: flex;
  align-items: center;
  padding: 0 33px 0 9px;
}
.info {
  width: 48px;
  height: 48px;
  border-radius: 50%;
  background: #fdf8ec;
  display: grid;
  place-items: center;
}
.url { margin-left: 16px; font-size: 28px; color: #4a463f; letter-spacing: 0.4px; }
.url b { font-weight: 400; color: #1f1c14; }
.star { width: 30px; height: 30px; margin-left: auto; }
.react { width: 32px; height: 32px; margin-left: 36px; }
.puzzle { width: 34px; height: 34px; margin: -4px 0 0 40px; }
.tsep { width: 4px; height: 32px; border-radius: 2px; background: #f8e08c; margin-left: 34px; }
.dl { width: 32px; height: 32px; margin-left: 36px; }
.avatar {
  width: 40px;
  height: 40px;
  margin-left: 36px;
  border-radius: 50%;
  background: #b03f1f;
  color: #fff;
  font-size: 20px;
  line-height: 40px;
  text-align: center;
}
.dots { width: 8px; height: 30px; margin-left: 48px; fill: #4b462b; }

/* page */
.page {
  position: relative;
  height: 1794px;
  background: #f3f4f6;
  font-family: Lato, "Open Sans", sans-serif;
  font-size: 32px;
}
.appnav {
  height: 130px;
  background: #fff;
  border-bottom: 2px solid #f3f4f6;
  display: flex;
  align-items: center;
  justify-content: flex-end;
  gap: 15px;
  padding-right: 527px;
  font-size: 28px;
  font-weight: 500;
  letter-spacing: 0.2px;
  color: #6b7280;
}
.apphead { height: 184px; background: #fff; box-shadow: 0 2px 6px rgba(0, 0, 0, .2); }
.card {
  width: 2432px;
  height: 416px;
  margin: 96px auto 0;
  padding-top: 120px;
  border-radius: 16px;
  background: #fff;
  box-shadow: 0 2px 4px rgba(0, 0, 0, .06);
  display: flex;
  flex-direction: column;
  align-items: center;
}
.act {
  width: 500px;
  height: 108px;
  padding-bottom: 3px;
  border-radius: 16px;
  color: #fff;
  letter-spacing: -0.25px;
}
.act.blue { background: #bacee4; letter-spacing: 0.2px; }
.act.green { background: #50a650; }
.overlay {
  position: absolute;
  inset: 0;
  background: linear-gradient(rgba(0, 0, 0, 0) 96%, rgba(0, 0, 0, .08)), rgba(0, 0, 0, .5);
}
.modal {
  width: 2280px;
  height: 489px;
  padding: 48px;
  border-radius: 12px;
  background: #fff;
  color: #111827;
}
.mhead { display: flex; align-items: center; height: 84px; }
.mhead h2 {
  margin: 0;
  width: 299px;
  padding-bottom: 1px;
  font-size: 40px;
  font-weight: 600;
  letter-spacing: 0.45px;
  white-space: nowrap;
}
.field {
  width: 371px;
  height: 84px;
  border: 2px solid #d1d5db;
  border-radius: 12px;
  padding-left: 24px;
  line-height: 78px;
  color: #6b7280;
}
.ara { padding-bottom: 2px; }
.books {
  width: 2022px;
  margin-top: 30px;
  table-layout: fixed;
  border-collapse: collapse;
  white-space: nowrap;
}
.books tr { height: 82px; }
.books th, .books td { padding: 0 0 0 32px; text-align: left; }
.books td { letter-spacing: 0.1px; }
.books th { padding: 0; text-align: center; font-weight: 700; letter-spacing: 0.25px; }
.c1 { width: 323px; }
.c2 { width: 263px; }
.c3 { width: 324px; }
.c4 { width: 332px; }
.c5 { width: 231px; }
.c6 { width: 143px; }
.c7 { width: 406px; }
.ok { display: block; width: 40px; height: 40px; border-radius: 50%; background: #55a551; margin: -10px 0 0 -3px; }
.kapat {
  display: block;
  width: 147px;
  height: 80px;
  margin-top: 35px;
  padding-bottom: 3px;
  border-radius: 12px;
  background: #6b7280;
  color: #fff;
}

/* desktop strip and dock */
.desk {
  height: 168px;
  flex: none;
  display: flex;
  justify-content: center;
  padding-top: 8px;
  background:
    linear-gradient(90deg, transparent 372px, #2c50d8 372px, #6b8bf0 400px, #bfc0e6 480px, #c3c2e4 560px, #7f96f0 650px, transparent 660px) 0 158px / 100% 10px no-repeat,
    linear-gradient(90deg, transparent 1180px, #6f98e6 1370px, #2448d0 1428px, transparent 1429px) 0 158px / 100% 10px no-repeat,
    linear-gradient(90deg, transparent 3173px, #1d5fd8 3173px, #6f8df0 3205px, #c6dcf8 3250px, transparent 3290px) 0 158px / 100% 10px no-repeat,
    linear-gradient(90deg, #eef0ff 0, #d5d7e8 300px, #c8d2e6 1400px, #c0d2e2 2600px, #d6f2f4 3300px, #e2fffe 3420px);
}
.dock {
  position: relative;
  z-index: 2;
  width: 3200px;
  height: 150px;
  border-radius: 50px;
  padding: 0 5px;
  display: flex;
  border: 1px solid rgba(255, 255, 255, .35);
  box-shadow: 0 0 2px rgba(0, 0, 0, .35);
  background:
    linear-gradient(rgba(70, 80, 100, .2), rgba(255, 255, 255, 0) 50%, rgba(255, 255, 255, .25)),
    linear-gradient(90deg, #d3d7e6 0, #d0d5e6 220px, #b3c6ef 320px, #c3cdf0 500px, #ced8ea 680px, #ced8ea 1150px, #b0cbee 1320px, #c3d2ec 1500px, #c8dcea 1900px, #c6dfec 2750px, #a9cdf0 2960px, #b8d8ee 3100px, #c6e2ea 3200px);
}
.app {
  width: 128px;
  flex: none;
  display: flex;
  align-items: center;
  flex-direction: column;
  justify-content: center;
  padding-bottom: 11px;
  position: relative;
}
.run::after {
  content: "";
  position: absolute;
  left: 60px;
  top: 137px;
  width: 8px;
  height: 8px;
  border-radius: 50%;
  background: #5a6678;
}
.ic { width: 96px; height: 96px; filter: drop-shadow(0 2px 2px rgba(0, 0, 0, .25)); }
.ic.big { width: 98px; height: 98px; }
.ic.gpt { color: #2b2f36; }
.ic.spot { width: 100px; height: 100px; }
.ic.spring { width: 120px; height: 120px; margin-left: 2px; }
.ic.trash { width: 88px; height: 112px; margin: -4px 0 0 4px; }
.bin { width: 120px; }
.split { width: 58px; flex: none; display: flex; justify-content: center; padding-top: 19px; }
.split i { width: 2px; height: 110px; background: rgba(60, 85, 105, .5); }
.split.end { padding-left: 3px; }
.jb { font: 600 32px Inter, sans-serif; fill: #fff; letter-spacing: -1px; }
.jb.mono { font: 700 33px "Liberation Mono", monospace; letter-spacing: -5px; }
```
